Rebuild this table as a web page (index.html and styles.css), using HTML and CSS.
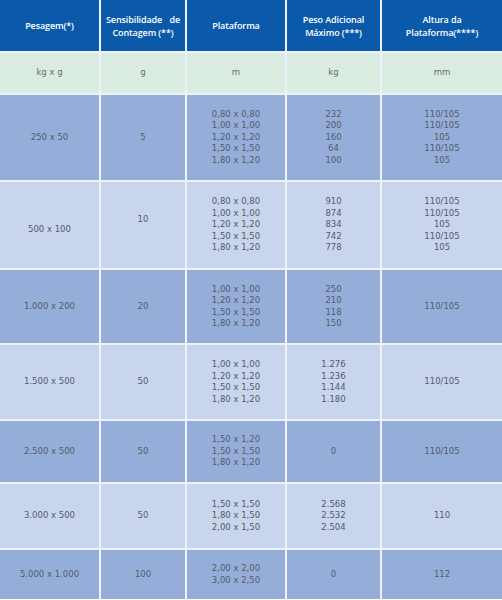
FILE: index.html
```html
<!DOCTYPE html>
<html>
<head>
<meta charset="utf-8">
<link rel="stylesheet" href="styles.css">
</head>
<body>
<div class="grid">
  <div class="c hd">Pesagem(*)</div>
  <div class="c hd"><span class="just">Sensibilidade de</span>Contagem (**)</div>
  <div class="c hd">Plataforma</div>
  <div class="c hd">Peso Adicional<br>Máximo (***)</div>
  <div class="c hd">Altura da<br>Plataforma(****)</div>

  <div class="c un">kg x g</div>
  <div class="c un">g</div>
  <div class="c un">m</div>
  <div class="c un">kg</div>
  <div class="c un">mm</div>

  <div class="c dk">250 x 50</div>
  <div class="c dk">5</div>
  <div class="c dk">0,80 x 0,80<br>1,00 x 1,00<br>1,20 x 1,20<br>1,50 x 1,50<br>1,80 x 1,20</div>
  <div class="c dk">232<br>200<br>160<br>64<br>100</div>
  <div class="c dk">110/105<br>110/105<br>105<br>110/105<br>105</div>

  <div class="c lt"><span class="down">500 x 100</span></div>
  <div class="c lt"><span class="up">10</span></div>
  <div class="c lt">0,80 x 0,80<br>1,00 x 1,00<br>1,20 x 1,20<br>1,50 x 1,50<br>1,80 x 1,20</div>
  <div class="c lt">910<br>874<br>834<br>742<br>778</div>
  <div class="c lt">110/105<br>110/105<br>105<br>110/105<br>105</div>

  <div class="c dk">1.000 x 200</div>
  <div class="c dk">20</div>
  <div class="c dk">1,00 x 1,00<br>1,20 x 1,20<br>1,50 x 1,50<br>1,80 x 1,20</div>
  <div class="c dk">250<br>210<br>118<br>150</div>
  <div class="c dk">110/105</div>

  <div class="c lt">1.500 x 500</div>
  <div class="c lt">50</div>
  <div class="c lt">1,00 x 1,00<br>1,20 x 1,20<br>1,50 x 1,50<br>1,80 x 1,20</div>
  <div class="c lt">1.276<br>1.236<br>1.144<br>1.180</div>
  <div class="c lt">110/105</div>

  <div class="c dk">2.500 x 500</div>
  <div class="c dk">50</div>
  <div class="c dk">1,50 x 1,20<br>1,50 x 1,50<br>1,80 x 1,20</div>
  <div class="c dk">0</div>
  <div class="c dk">110/105</div>

  <div class="c lt">3.000 x 500</div>
  <div class="c lt">50</div>
  <div class="c lt">1,50 x 1,50<br>1,80 x 1,50<br>2,00 x 1,50</div>
  <div class="c lt">2.568<br>2.532<br>2.504</div>
  <div class="c lt">110</div>

  <div class="c dk">5.000 x 1.000</div>
  <div class="c dk">100</div>
  <div class="c dk">2,00 x 2,00<br>3,00 x 2,50</div>
  <div class="c dk">0</div>
  <div class="c dk">112</div>
</div>
</body>
</html>
```
FILE: styles.css
```css
html, body {
  margin: 0;
  padding: 0;
  background: #ffffff;
}
.grid {
  width: 502px;
  display: grid;
  grid-template-columns: 99px 84px 98px 93px 120px;
  grid-template-rows: 51px 40px 85px 86px 73px 74px 61px 64px 49px;
  gap: 2px;
  background: #eef2fa;
  font-family: "DejaVu Sans", Verdana, sans-serif;
  font-size: 8.5px;
  line-height: 11.5px;
  color: #535b6a;
}
.c {
  display: flex;
  flex-direction: column;
  align-items: center;
  justify-content: center;
  text-align: center;
}
.hd {
  background: #0b5aa9;
  color: #ffffff;
  font-family: "Open Sans", "DejaVu Sans", sans-serif;
  font-weight: 600;
  font-size: 9px;
  line-height: 13px;
  letter-spacing: -0.1px;
}
.just {
  display: block;
  width: 74px;
  white-space: nowrap;
  text-align: justify;
  text-align-last: justify;
}
.un {
  background: #d9ecdf;
  color: #666d72;
}
.dk {
  background: #95aed9;
}
.lt {
  background: #c9d5ec;
}
.up {
  display: block;
  margin-bottom: 10px;
}
.down {
  display: block;
  margin-top: 10px;
}
```
